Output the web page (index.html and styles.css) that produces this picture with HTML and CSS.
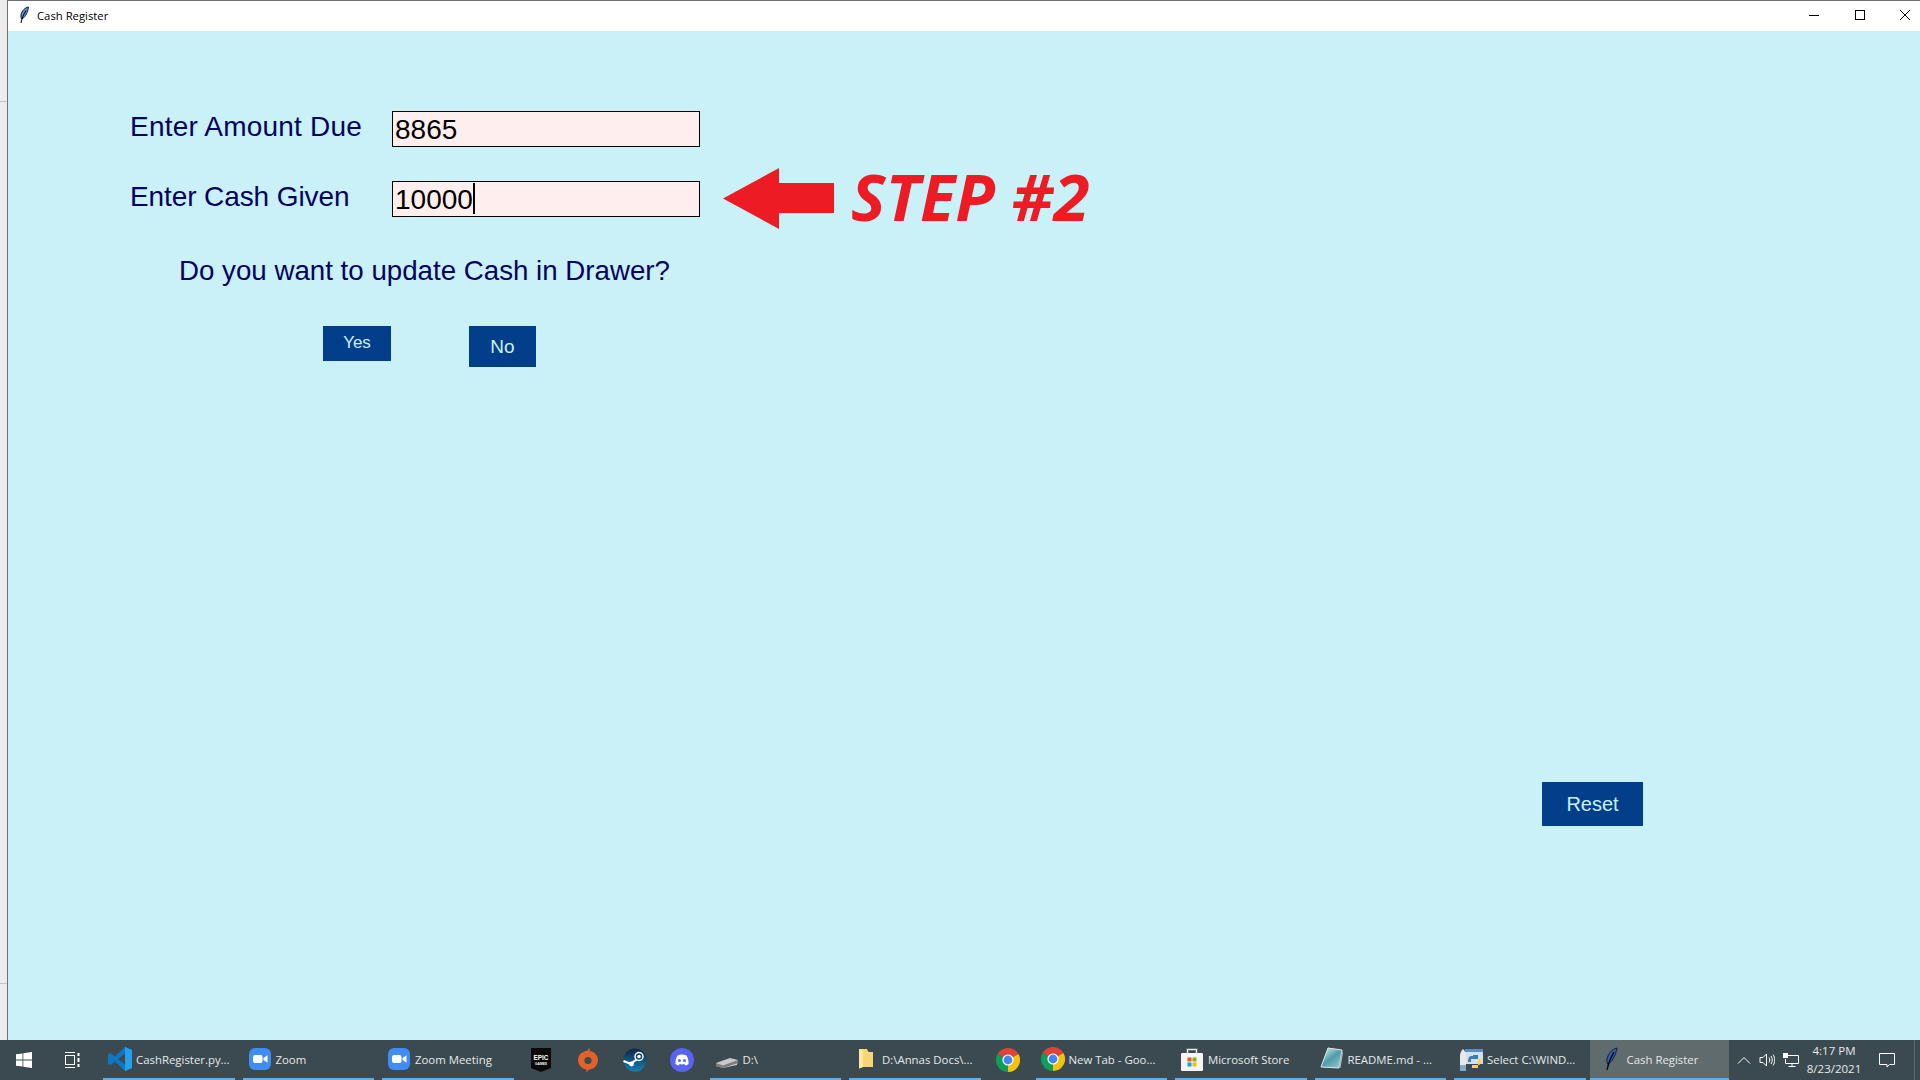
FILE: index.html
```html
<!DOCTYPE html>
<html lang="en">
<head>
  <meta charset="UTF-8">
  <title>Cash Register</title>
  <link rel="stylesheet" href="styles.css">
</head>
<body>
  <div class="desktop">
    <div class="strip">
      <div class="strip-part strip-top"></div>
      <div class="strip-part strip-mid"></div>
      <div class="strip-part strip-end"></div>
    </div>

    <div class="window">
      <div class="titlebar">
        <svg class="feather" viewBox="0 0 12 18"><path d="M10.500 1C7 1.500 3.500 5 3 9c-.2 1.600 0 3 .5 4 3-1 6-5 7-12z" fill="#5b8fd8" stroke="#10203a" stroke-width="1"/><path d="M8 4.500C5.800 8 4 11.500 3 17" fill="none" stroke="#000" stroke-width="1"/></svg>
        <span class="title">Cash Register</span>
        <div class="controls">
          <svg class="ctl" viewBox="0 0 10 10"><path d="M0 5.500h10" stroke="#000" stroke-width="1"/></svg>
          <svg class="ctl" viewBox="0 0 10 10"><rect x=".5" y=".5" width="9" height="9" fill="none" stroke="#000" stroke-width="1"/></svg>
          <svg class="ctl" viewBox="0 0 10 10"><path d="M0 0l10 10M10 0L0 10" stroke="#000" stroke-width="1"/></svg>
        </div>
      </div>

      <div class="content">
        <div class="form-row">
          <label class="field-label label-due">Enter Amount Due</label>
          <div class="entry">8865</div>
        </div>
        <div class="form-row second">
          <label class="field-label label-cash">Enter Cash Given</label>
          <div class="entry">10000<span class="caret"></span></div>
          <div class="annotation">
            <svg class="arrow" viewBox="0 0 111 61"><path d="M0 30.500L56 0v15h55v30H56v16z" fill="#ed1c24"/></svg>
            <span class="step">STEP #2</span>
          </div>
        </div>
        <p class="question">Do you want to update Cash in Drawer?</p>
        <div class="choice-row">
          <button class="btn btn-yes">Yes</button>
          <button class="btn btn-no">No</button>
        </div>
        <div class="reset-row">
          <button class="btn btn-reset">Reset</button>
        </div>
      </div>
    </div>
  </div>

  <div class="taskbar">
    <div class="sys-slot">
      <svg class="icon-16" viewBox="0 0 16 16"><path d="M0 2.300l6.500-.9v6.200H0zM7.300 1.300L16 0v7.600H7.300zM0 8.400h6.500v6.200L0 13.700zM7.300 8.400H16V16l-8.700-1.200z" fill="#fff"/></svg>
    </div>
    <div class="sys-slot">
      <svg class="icon-16" viewBox="0 0 16 16" fill="none" stroke="#fff" stroke-width="1"><path d="M1 .5h10M1 15.500h10"/><rect x="1.500" y="3.500" width="9" height="9"/><path d="M14.500 1v3M14.500 6v4M14.500 12v3" stroke-width="2"/></svg>
    </div>

    <div class="task">
      <svg class="icon-24" viewBox="0 0 24 24"><path d="M17 0l7 3v18l-7 3L7 14.500l-4.500 3.500L0 16.500v-9L2.500 6 7 9.500z" fill="#0f78c4"/><path d="M17 0l7 3v18l-7 3z" fill="#24a0ed"/><path d="M17 6.500L10 12l7 5.500z" fill="#3b4a50"/></svg>
      <span class="task-name">CashRegister.py...</span>
    </div>
    <div class="task">
      <svg class="icon-24" viewBox="0 0 24 24"><rect width="22" height="22" x="1" y="1" rx="6" fill="#3f8cf3"/><rect x="5" y="8" width="9.500" height="8" rx="2" fill="#fff"/><path d="M15.500 11l4-2.800v7.600l-4-2.800z" fill="#fff"/></svg>
      <span class="task-name">Zoom</span>
    </div>
    <div class="task">
      <svg class="icon-24" viewBox="0 0 24 24"><rect width="22" height="22" x="1" y="1" rx="6" fill="#3f8cf3"/><rect x="5" y="8" width="9.500" height="8" rx="2" fill="#fff"/><path d="M15.500 11l4-2.800v7.600l-4-2.800z" fill="#fff"/></svg>
      <span class="task-name">Zoom Meeting</span>
    </div>

    <div class="pin">
      <svg class="icon-24" viewBox="0 0 24 24"><path d="M2 0h20v20l-10 4-10-4z" fill="#0a0a0a"/><text x="12" y="12" class="epic-big" textLength="15" lengthAdjust="spacingAndGlyphs">EPIC</text><text x="12" y="17" class="epic-small" textLength="12" lengthAdjust="spacingAndGlyphs">GAMES</text></svg>
    </div>
    <div class="pin">
      <svg class="icon-24" viewBox="0 0 24 24"><path d="M13 0c1 1 1 2 .6 3 5 .8 8.400 4.600 8.400 9 0 5.500-4.500 9.500-9 9.500-.8 1.200-1.800 2-2.800 2.500.4-1 .4-1.800.1-2.600C5.500 20.500 2 16.800 2 12 2 7 6 3.500 10.500 3c1.200-.6 2-1.700 2.500-3z" fill="#e2622a"/><circle cx="12" cy="12.500" r="3.600" fill="#3b4a50"/></svg>
    </div>
    <div class="pin">
      <svg class="icon-24" viewBox="0 0 24 24"><defs><linearGradient id="steamFill" x1="0" y1="0" x2="0" y2="1"><stop offset="0" stop-color="#10244a"/><stop offset="1" stop-color="#1480b0"/></linearGradient></defs><circle cx="12" cy="12" r="11.500" fill="url(#steamFill)"/><circle cx="16" cy="8.500" r="4" fill="none" stroke="#fff" stroke-width="1.500"/><circle cx="16" cy="8.500" r="1.800" fill="#fff"/><path d="M.5 13l7 2.800 6-4.200" fill="none" stroke="#fff" stroke-width="2"/><circle cx="8.500" cy="16" r="2.400" fill="#fff"/></svg>
    </div>
    <div class="pin">
      <svg class="icon-24" viewBox="0 0 24 24"><circle cx="12" cy="12" r="12" fill="#5865f2"/><path d="M7.500 7.500c3-1.200 6-1.200 9 0 1.500 2.500 2.200 5.500 2 8.500-1 .9-2.200 1.300-3.300 1.500l-.8-1.400c-1.600.4-3.200.4-4.800 0l-.8 1.400C7.700 17.300 6.500 16.900 5.500 16c-.2-3 .5-6 2-8.500z" fill="#fff"/><circle cx="9.500" cy="12.500" r="1.500" fill="#5865f2"/><circle cx="14.500" cy="12.500" r="1.500" fill="#5865f2"/></svg>
    </div>

    <div class="task">
      <svg class="icon-24" viewBox="0 0 24 24"><path d="M1 16l14-5 8 2-1 5-14 3-7-2z" fill="#c9c9c9"/><path d="M1 16l7 2.500L23 13v3L8 21l-7-2z" fill="#7c7c7c"/></svg>
      <span class="task-name">D:\</span>
    </div>
    <div class="task">
      <svg class="icon-24" viewBox="0 0 24 24"><path d="M5 2h8l1.500 3H19v15H9l-4 1.500z" fill="#f6d573"/><path d="M5 2l4 1v17l-4 1.500z" fill="#fbe7a6"/></svg>
      <span class="task-name">D:\Annas Docs\...</span>
    </div>

    <div class="pin">
      <svg class="icon-24" viewBox="0 0 24 24"><use href="#chromeLogo"/></svg>
    </div>
    <div class="task">
      <svg class="icon-24" viewBox="0 0 24 24"><g id="chromeLogo"><path d="M12 12L1.600 6A12 12 0 0 1 22.400 6z" fill="#db4437"/><path d="M12 12L22.400 6A12 12 0 0 1 12 24z" fill="#f4c20d"/><path d="M12 12V24A12 12 0 0 1 1.600 6z" fill="#0f9d58"/><circle cx="12" cy="12" r="5.600" fill="#fff"/><circle cx="12" cy="12" r="4.400" fill="#4285f4"/></g></svg>
      <span class="task-name">New Tab - Goo...</span>
    </div>
    <div class="task">
      <svg class="icon-24" viewBox="0 0 24 24"><path d="M7.500 7V2.500h9V7" fill="none" stroke="#e8e8e8" stroke-width="1.500"/><rect x="1" y="6" width="22" height="18" rx="1" fill="#f4f4f4"/><rect x="7.500" y="10.500" width="4" height="4" fill="#e4572e"/><rect x="12.500" y="10.500" width="4" height="4" fill="#7fba00"/><rect x="7.500" y="15.500" width="4" height="4" fill="#00a4ef"/><rect x="12.500" y="15.500" width="4" height="4" fill="#ffb900"/></svg>
      <span class="task-name">Microsoft Store</span>
    </div>
    <div class="task">
      <svg class="icon-24" viewBox="0 0 24 24"><defs><linearGradient id="noteFill" x1="0" y1="0" x2=".8" y2="1"><stop offset="0" stop-color="#e4f3f4"/><stop offset=".55" stop-color="#4f9cab"/><stop offset="1" stop-color="#8fc3cc"/></linearGradient></defs><path d="M8 1l14 2-3 18-18-1z" fill="url(#noteFill)" stroke="#dfe8ea" stroke-width="1"/><path d="M19 21l3-18 1 3-2.500 15z" fill="#a9b8bb"/></svg>
      <span class="task-name">README.md - ...</span>
    </div>
    <div class="task">
      <svg class="icon-24" viewBox="0 0 24 24"><rect x="6" y="2" width="18" height="15" fill="#cfe0ee"/><rect x="6" y="2" width="18" height="3" fill="#5b8fc4"/><path d="M4 2c2 2 3 4 3 7v9H1V9c0-3 1-5 3-7z" fill="#e8e8e8"/><path d="M1 18h6v6H1z" fill="#7fa8c9"/><path d="M14 8h5v4h-7v3h-3c0-4 1-6 3-6h2z" fill="#3f7cb0"/><path d="M19 12h3c0 5-1 6-3 6v3h-6v-3h6z" fill="#ffd241"/></svg>
      <span class="task-name">Select C:\WIND...</span>
    </div>
    <div class="task active">
      <svg class="icon-24" viewBox="0 0 16 24"><path d="M14 1C9 2 5 7 4 12c-.4 2 0 4 .6 5C9 15 12.500 9 14 1z" fill="#2f5fae" stroke="#12203a" stroke-width="1"/><path d="M11 5C8 10 5.500 15 4 23" fill="none" stroke="#000" stroke-width="1.200"/></svg>
      <span class="task-name">Cash Register</span>
    </div>

    <div class="tray">
      <svg class="tray-icon" viewBox="0 0 14 8"><path d="M1 7.500l6-6 6 6" fill="none" stroke="#fff" stroke-width="1"/></svg>
      <svg class="tray-icon speaker" viewBox="0 0 16 14" fill="none" stroke="#fff" stroke-width="1"><path d="M1 4.500h3l3.500-3.500v12L4 9.500H1z"/><path d="M10 4.500c1 1.500 1 3.500 0 5M12 3c1.700 2.500 1.700 5.500 0 8M14 1.500c2.300 3.300 2.300 7.700 0 11"/></svg>
      <svg class="tray-icon network" viewBox="0 0 16 14" fill="none" stroke="#fff" stroke-width="1"><path d="M4.500 2.500h11v8h-13V6"/><path d="M9 10.500v3M5.500 13.500h7"/><rect x=".5" y=".5" width="4" height="4" fill="#fff"/></svg>
      <div class="clock">
        <span class="clock-time">4:17 PM</span>
        <span class="clock-date">8/23/2021</span>
      </div>
      <svg class="tray-icon notify" viewBox="0 0 16 15"><path d="M.5.500h15v11h-5l-2.500 2.500v-2.500h-7.500z" fill="none" stroke="#fff" stroke-width="1"/></svg>
      <div class="show-desktop"></div>
    </div>
  </div>
</body>
</html>
```

FILE: styles.css
```css
html, body {
  margin: 0;
  padding: 0;
  width: 100%;
  height: 100%;
  overflow: hidden;
}

body {
  display: flex;
  flex-direction: column;
  font-family: "Liberation Sans", Arial, sans-serif;
}

.desktop {
  flex: 1;
  display: flex;
  min-height: 0;
}

.strip {
  width: 7px;
  display: flex;
  flex-direction: column;
  border-right: 1px solid #707070;
}

.strip-part {
  background: #ececec;
  border-bottom: 1px solid #c4c4c4;
}

.strip-top {
  height: 101px;
}

.strip-mid {
  height: 881px;
}

.strip-end {
  flex: 1;
  border-bottom: 0;
}

.window {
  flex: 1;
  display: flex;
  flex-direction: column;
  min-width: 0;
}

.titlebar {
  height: 28px;
  padding-bottom: 2px;
  display: flex;
  align-items: center;
  background: #fff;
  border-top: 1px solid #6f6f6f;
  font-family: "Open Sans", sans-serif;
  font-size: 11.3px;
  color: #000;
}

.feather {
  width: 12px;
  height: 18px;
  margin-left: 10px;
}

.title {
  margin-left: 7px;
}

.controls {
  margin-left: auto;
  margin-right: 10px;
  display: flex;
  gap: 35.5px;
}

.ctl {
  width: 10px;
  height: 10px;
}

.content {
  flex: 1;
  display: flex;
  flex-direction: column;
  padding: 80px 0 0 122px;
  background: #caf0f8;
  color: #03045e;
  font-size: 28px;
  min-height: 0;
}

.form-row {
  display: flex;
  height: 36px;
}

.form-row.second {
  margin-top: 34px;
}

.field-label {
  width: 262px;
  line-height: 32px;
}

.label-due {
  letter-spacing: .2px;
}

.label-cash {
  letter-spacing: -.1px;
}

.entry {
  width: 304px;
  height: 34px;
  padding-left: 2px;
  border: 1px solid #000;
  background: #ffeeee;
  color: #000;
  line-height: 36px;
  display: flex;
  align-items: flex-start;
}

.caret {
  width: 2px;
  height: 31px;
  margin-top: 1px;
  background: #000;
}

.annotation {
  display: flex;
  align-items: center;
  gap: 17px;
  height: 36px;
  margin-left: 23px;
}

.arrow {
  width: 111px;
  height: 61px;
  flex: none;
  margin-bottom: 2px;
}

.step {
  font-family: "Open Sans", sans-serif;
  font-weight: 700;
  font-style: italic;
  font-size: 65px;
  line-height: 1;
  margin-bottom: 6px;
  color: #ed1c24;
  white-space: nowrap;
}

.question {
  margin: 38px 0 0 49px;
  font-size: 27.7px;
  line-height: 32px;
}

.choice-row {
  display: flex;
  align-items: flex-start;
  margin: 39px 0 0 193px;
}

.btn {
  padding: 0;
  border: 0;
  background: #023e8a;
  color: #caf0f8;
  font-family: "Liberation Sans", Arial, sans-serif;
}

.btn-yes {
  width: 68px;
  height: 35px;
  font-size: 17px;
  padding-bottom: 2px;
}

.btn-no {
  width: 67px;
  height: 41px;
  margin-left: 78px;
  font-size: 19px;
}

.reset-row {
  margin-top: auto;
  display: flex;
  justify-content: flex-end;
  padding: 0 277px 214px 0;
}

.btn-reset {
  width: 101px;
  height: 44px;
  font-size: 20px;
}

.taskbar {
  height: 40px;
  flex: none;
  display: flex;
  align-items: stretch;
  background: #3b4a50;
  color: #e6e9ea;
  font-family: "Open Sans", sans-serif;
  font-size: 11.4px;
}

.sys-slot {
  width: 48px;
  display: flex;
  align-items: center;
  justify-content: center;
}

.sys-slot + .sys-slot {
  margin-right: 3px;
}

.icon-16 {
  width: 16px;
  height: 16px;
}

.icon-24 {
  width: 24px;
  height: 24px;
  flex: none;
}

.pin {
  width: 47px;
  padding-bottom: 1px;
  display: flex;
  align-items: center;
  justify-content: center;
}

.task {
  width: 139.5px;
  box-sizing: border-box;
  display: flex;
  align-items: center;
  gap: 4px;
  padding: 0 0 2px 9px;
  position: relative;
  white-space: nowrap;
}

.task::after {
  content: "";
  position: absolute;
  left: 4px;
  right: 4px;
  bottom: 0;
  height: 2px;
  background: #63aee6;
}

.task.active {
  background: #5f6b6c;
}

.task.active::after {
  left: 0;
  right: 0;
}

.epic-big {
  font: bold 8px "Liberation Sans Narrow", "Liberation Sans", sans-serif;
  fill: #fff;
  text-anchor: middle;
}

.epic-small {
  font: bold 3.5px "Liberation Sans", sans-serif;
  fill: #fff;
  text-anchor: middle;
}

.tray {
  flex: 1;
  display: flex;
  align-items: center;
  min-width: 0;
}

.tray-icon {
  flex: none;
  width: 14px;
  height: 8px;
  margin-left: 8px;
}

.speaker {
  width: 16px;
  height: 14px;
  margin-left: 8px;
}

.network {
  width: 16px;
  height: 14px;
  margin-left: 8px;
}

.clock {
  width: 70px;
  display: flex;
  flex-direction: column;
  align-items: center;
  font-size: 11.5px;
  line-height: 18px;
}

.notify {
  width: 16px;
  height: 15px;
  margin-left: 10px;
}

.show-desktop {
  width: 1px;
  height: 100%;
  margin-left: 19px;
  background: #5a676c;
}
```
